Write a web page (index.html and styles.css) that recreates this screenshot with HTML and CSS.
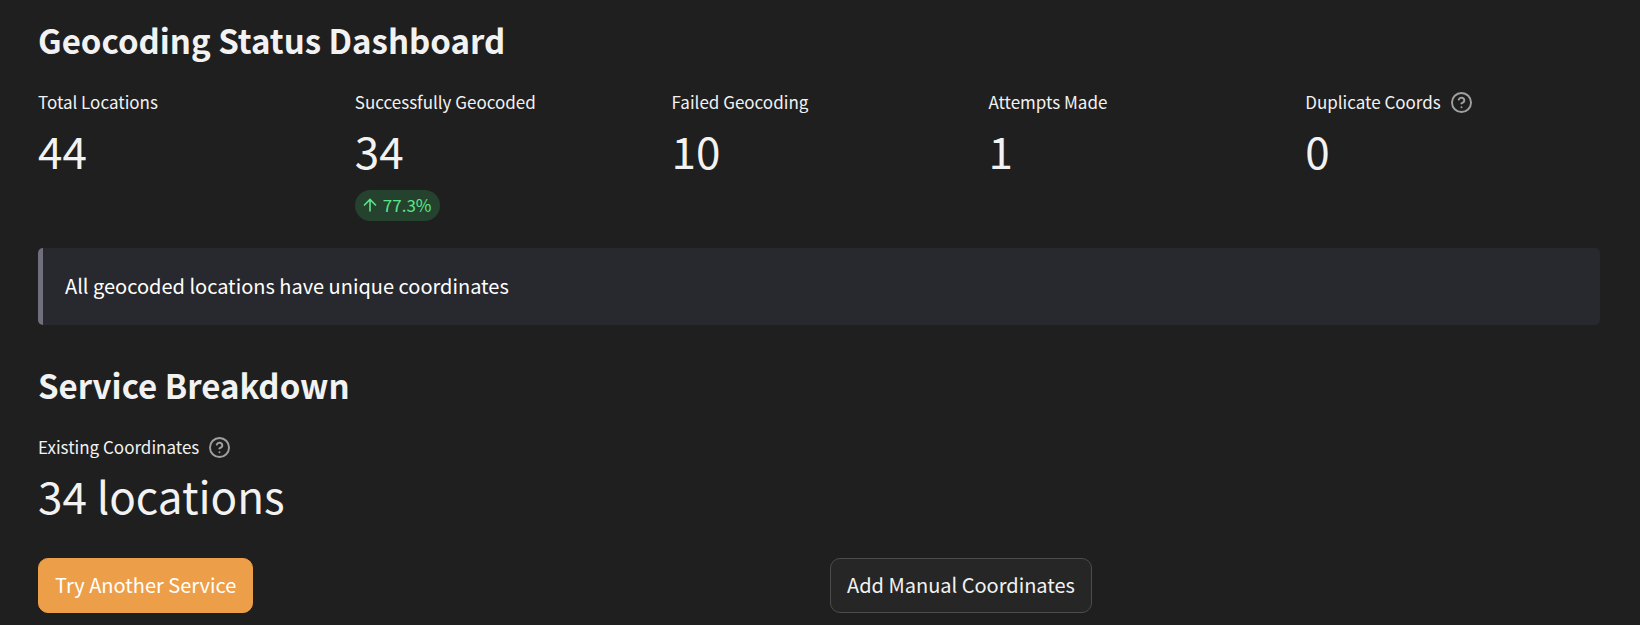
FILE: index.html
```html
<!DOCTYPE html>
<html lang="en">
<head>
<meta charset="utf-8">
<title>Geocoding Status Dashboard</title>
<link rel="stylesheet" href="styles.css">
</head>
<body>
<main class="page">
  <h2 class="heading">Geocoding Status Dashboard</h2>
  <section class="metrics">
    <div class="metric"><div class="label">Total Locations</div><div class="value">44</div></div>
    <div class="metric"><div class="label">Successfully Geocoded</div><div class="value">34</div>
      <div class="delta"><svg class="arrow" viewBox="0 0 16 16" aria-hidden="true"><path d="M8 14.500V2.500M2 8.500L8 2.500l6 6"/></svg>77.3%</div></div>
    <div class="metric"><div class="label">Failed Geocoding</div><div class="value">10</div></div>
    <div class="metric"><div class="label">Attempts Made</div><div class="value">1</div></div>
    <div class="metric"><div class="label">Duplicate Coords <svg class="help" viewBox="1 1 22 22" role="img" aria-label="Help"><circle cx="12" cy="12" r="10"/><path d="M9.090 9a3 3 0 0 1 5.830 1c0 2-3 3-3 3M12 17h.01"/></svg></div><div class="value">0</div></div>
  </section>
  <p class="notice">All geocoded locations have unique coordinates</p>
  <h2 class="heading">Service Breakdown</h2>
  <section class="metric">
    <div class="label">Existing Coordinates <svg class="help" viewBox="1 1 22 22" role="img" aria-label="Help"><circle cx="12" cy="12" r="10"/><path d="M9.090 9a3 3 0 0 1 5.830 1c0 2-3 3-3 3M12 17h.01"/></svg></div>
    <div class="value">34 locations</div>
  </section>
  <div class="actions">
    <div><button class="button primary" type="button">Try Another Service</button></div>
    <div><button class="button" type="button">Add Manual Coordinates</button></div>
  </div>
</main>
</body>
</html>
```
FILE: styles.css
```css
* { box-sizing: border-box; }
body {
  margin: 0;
  background: #1f1f1f;
  color: #f2f2f2;
  font-family: "Source Sans Pro", "Noto Sans CJK SC", sans-serif;
}
.page { padding: 14px 40px 12px 38px; }
.heading { margin: 0 0 21px; font-size: 33px; line-height: 52px; font-weight: 700; }
.metrics { display: grid; grid-template-columns: repeat(5, 1fr); gap: 22px; }
.label { display: flex; align-items: center; gap: 10px; font-size: 17px; line-height: 30px; }
.value { font-size: 44px; line-height: 66px; }
.help { width: 21px; height: 21px; fill: none; stroke: #a0a0a0; stroke-width: 2; stroke-linecap: round; stroke-linejoin: round; }
.delta { display: flex; align-items: center; gap: 5px; width: fit-content; height: 31px; margin-top: 7px; padding: 0 8px 2px 7px; border-radius: 16px; background: #25422f; color: #5ce488; font-size: 17px; }
.arrow { width: 16px; height: 16px; fill: none; stroke: currentColor; stroke-width: 1.6; }
.notice { margin: 27px 0 34px; padding: 23px 22px 25px; border-left: 5px solid #6f707b; border-radius: 5px; background: #28292f; color: #fff; font-size: 20px; line-height: 29px; }
.actions { display: grid; grid-template-columns: 1fr 1fr; gap: 22px; margin-top: 30px; }
.button { height: 55px; padding: 0 16px 2px; border: 1px solid #4c4c4c; border-radius: 10px; background: #262626; color: inherit; font: inherit; font-size: 20px; }
.primary { border-color: #ed9e48; background: #ed9e48; color: #fff; }
```
